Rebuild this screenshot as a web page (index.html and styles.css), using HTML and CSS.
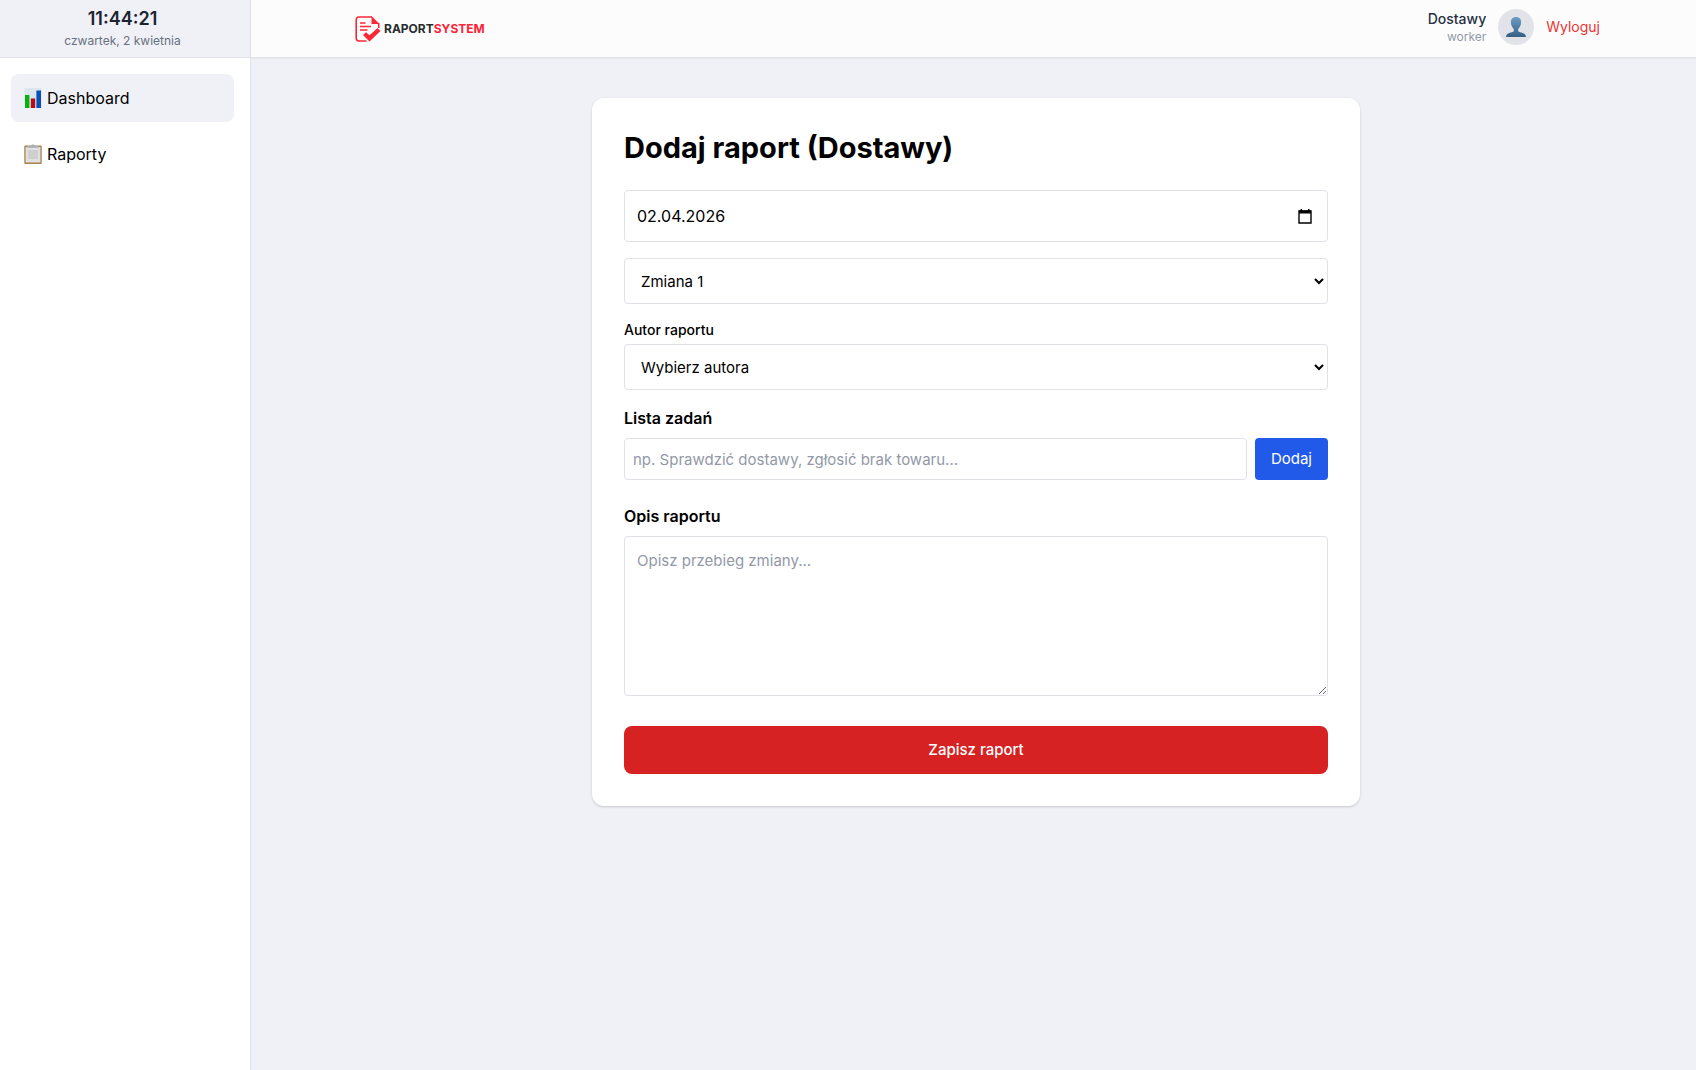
FILE: index.html
```html
<!doctype html>
<html lang="pl">
  <head>
    <meta charset="UTF-8" />
    <meta name="viewport" content="width=device-width, initial-scale=1.0" />
    <title>RaportSystem</title>
    <link rel="stylesheet" href="styles.css">
  </head>
  <body>
    <div class="layout">
      <aside class="sidebar">
        <div class="clock">
          <div class="clock-time">11:44:21</div>
          <div class="clock-date">czwartek, 2 kwietnia</div>
        </div>

        <nav class="nav">
          <a class="nav-link active" href="#dashboard">
            <svg class="nav-icon" viewBox="0 0 18 20" aria-hidden="true">
              <rect x="0.5" width="17" height="20" fill="#dce6ee" />
              <rect x="1" y="7" width="4.4" height="13" fill="#08b010" />
              <rect x="6.8" y="10.5" width="4.4" height="9.5" fill="#b80d18" />
              <rect x="12.4" y="2.5" width="4.6" height="17.5" fill="#0a4fb5" />
            </svg>
            <span>Dashboard</span>
          </a>
          <a class="nav-link" href="#raporty">
            <svg class="nav-icon" viewBox="0 0 18 20" aria-hidden="true">
              <rect x="0.3" y="1.5" width="17.4" height="18.5" rx="1" fill="#a9804e" />
              <rect x="1.6" y="3" width="14.8" height="15.500" fill="#e0e0e0" />
              <rect x="4" y="6" width="10" height="9" fill="#cfcfd0" />
              <path d="M3 3.800V2h4l1-1.600h2L11 2h4v1.800z" fill="#a8adb3" />
            </svg>
            <span>Raporty</span>
          </a>
        </nav>
      </aside>

      <div class="content">
        <header class="header">
          <div class="header-inner">
            <a class="logo" href="#dashboard">
              <svg class="logo-icon" viewBox="0 0 26 26" aria-hidden="true">
                <path d="M17 1H4Q1.200 1 1.200 4V22Q1.200 25 4 25H11.500" fill="none" stroke="#fb2638" stroke-width="1.600" />
                <path d="M16.500 0L24.500 8H16.500z" fill="#fb2638" />
                <path d="M23.700 7V12" stroke="#fb2638" stroke-width="1.600" />
                <path d="M5 7H10.500M5 10.500H16M5 14H12.500" stroke="#fb2638" stroke-width="1.400" />
                <path d="M8 19L11 16.200L14.500 19.200L22.500 12L25.500 15L14.500 25.500z" fill="#fb2638" />
              </svg>
              <span class="logo-text">RAPORT<span class="logo-accent">SYSTEM</span></span>
            </a>

            <div class="user">
              <div class="user-info">
                <div class="user-name">Dostawy</div>
                <div class="user-role">worker</div>
              </div>
              <div class="avatar">
                <svg class="avatar-icon" viewBox="0 0 20 20" aria-hidden="true">
                  <defs>
                    <linearGradient id="bust" x1="0" y1="0" x2="0" y2="1">
                      <stop offset="0" stop-color="#6d9cc2" />
                      <stop offset="1" stop-color="#365f85" />
                    </linearGradient>
                  </defs>
                  <path d="M10 0C6.500 0 4.700 2.300 4.900 5.500C5 8.500 6.300 10.500 7.800 12V14.300C6 15.800 0.300 15.500 0 20H20C19.700 15.500 14 15.800 12.200 14.300V12C13.700 10.500 15 8.500 15.100 5.500C15.300 2.300 13.500 0 10 0z" fill="url(#bust)" />
                </svg>
              </div>
              <button class="logout" type="button">Wyloguj</button>
            </div>
          </div>
        </header>

        <main class="main">
          <form class="card">
            <h1 class="card-title">Dodaj raport (Dostawy)</h1>

            <div class="date-field">
              <input class="date-input" type="text" value="02.04.2026" aria-label="Data raportu" />
              <button class="date-btn" type="button" aria-label="Pokaż kalendarz">
                <svg class="date-icon" viewBox="0 0 14 15" aria-hidden="true">
                  <path d="M1 2H13V14H1z" fill="none" stroke="#000" stroke-width="1.400" />
                  <path d="M1 1.500H13V4.500H1zM2.500 0H4V2H2.500zM10 0H11.500V2H10z" />
                </svg>
              </button>
            </div>

            <select class="select" aria-label="Zmiana">
              <option>Zmiana 1</option>
              <option>Zmiana 2</option>
              <option>Zmiana 3</option>
            </select>

            <div class="field">
              <label class="label-small" for="author">Autor raportu</label>
              <select class="select" id="author">
                <option>Wybierz autora</option>
              </select>
            </div>

            <div class="field">
              <label class="label" for="task">Lista zadań</label>
              <div class="task-row">
                <input class="task-input" id="task" type="text" placeholder="np. Sprawdzić dostawy, zgłosić brak towaru..." />
                <button class="btn btn-add" type="button">Dodaj</button>
              </div>
            </div>

            <div class="field field-description">
              <label class="label" for="description">Opis raportu</label>
              <textarea class="description" id="description" placeholder="Opisz przebieg zmiany..."></textarea>
            </div>

            <button class="btn btn-save" type="submit">Zapisz raport</button>
          </form>
        </main>
      </div>
    </div>
  </body>
</html>
```
FILE: styles.css
```css
:root {
  --background-color: #f0f1f6;
  --border-color: #e0e2e8;
  --text-color: #000;
  --muted-color: #9299a8;
  --red: #d62222;
  --blue: #2159e8;
}

* {
  margin: 0;
  padding: 0;
  box-sizing: border-box;
}

body {
  font-family: Inter, -apple-system, BlinkMacSystemFont, "Segoe UI", sans-serif;
  font-size: 16px;
  line-height: 24px;
  background-color: var(--background-color);
  color: var(--text-color);
}

input,
select,
textarea,
button {
  font: inherit;
  color: inherit;
}

.layout {
  display: flex;
  min-height: 100vh;
}

.sidebar {
  flex: none;
  width: 251px;
  background-color: #fff;
  border-right: 1px solid var(--border-color);
}

.clock {
  height: 58px;
  padding: 5px 5px 0 0;
  text-align: center;
  background-color: var(--background-color);
  border-bottom: 1px solid var(--border-color);
}

.clock-time {
  font-size: 18px;
  line-height: 28px;
  font-weight: 600;
  color: #1c2431;
}

.clock-date {
  font-size: 12px;
  line-height: 16px;
  color: #687080;
}

.nav {
  display: flex;
  flex-direction: column;
  gap: 8px;
  padding: 16px 16px 16px 11px;
}

.nav-link {
  display: flex;
  align-items: center;
  gap: 5px;
  padding: 12px 13px;
  border-radius: 8px;
  color: inherit;
  text-decoration: none;
}

.nav-link.active,
.nav-link:hover {
  background-color: var(--background-color);
}

.nav-icon {
  width: 18px;
  height: 20px;
}

.content {
  flex: 1;
  min-width: 0;
}

.header {
  padding-left: 5px;
  background-color: #fcfcfc;
  border-bottom: 1px solid var(--border-color);
  box-shadow: 0 1px 2px rgba(0, 0, 0, 0.05);
}

.header-inner {
  display: flex;
  align-items: center;
  justify-content: space-between;
  max-width: 1280px;
  height: 57px;
  margin: 0 auto;
  padding: 0 16px;
}

.logo {
  display: flex;
  align-items: center;
  gap: 3px;
  padding-left: 3px;
  color: #262d2c;
  text-decoration: none;
}

.logo-icon {
  width: 26px;
  height: 26px;
}

.logo-text {
  font-size: 12px;
  font-weight: 700;
}

.logo-accent {
  color: #fb2638;
}

.user {
  display: flex;
  align-items: center;
  gap: 12px;
  padding-bottom: 3px;
}

.user-info {
  text-align: right;
}

.user-name {
  font-size: 14px;
  line-height: 20px;
  font-weight: 500;
  color: #273142;
}

.user-role {
  font-size: 12px;
  line-height: 16px;
  color: var(--muted-color);
}

.avatar {
  display: flex;
  align-items: center;
  justify-content: center;
  width: 36px;
  height: 36px;
  border-radius: 50%;
  background-color: #e2e3e9;
}

.avatar-icon {
  width: 20px;
  height: 20px;
}

.logout {
  border: none;
  background: none;
  font-size: 14px;
  color: #ea3434;
  cursor: pointer;
}

.main {
  padding: 40px 0 40px 5px;
}

.card {
  display: flex;
  flex-direction: column;
  gap: 16px;
  max-width: 768px;
  margin: 0 auto;
  padding: 32px;
  background-color: #fff;
  border-radius: 12px;
  box-shadow: 0 1px 3px rgba(0, 0, 0, 0.1), 0 1px 2px rgba(0, 0, 0, 0.08);
}

.card-title {
  margin-bottom: 8px;
  font-size: 29px;
  line-height: 36px;
  font-weight: 700;
}

.date-field,
.select,
.task-input,
.description {
  width: 100%;
  background-color: #fff;
  border: 1px solid var(--border-color);
  border-radius: 4px;
}

.date-field {
  display: flex;
  align-items: center;
  height: 52px;
  padding: 0 15px 0 12px;
}

.date-input {
  flex: 1;
  min-width: 0;
  border: none;
  outline: none;
  background: none;
}

.date-btn {
  display: flex;
  border: none;
  background: none;
  cursor: pointer;
}

.date-icon {
  width: 14px;
  height: 15px;
}

.select {
  height: 46px;
  padding: 0 0 0 12px;
  font-size: 15px;
}

.field {
  display: flex;
  flex-direction: column;
}

.label-small {
  margin-bottom: 4px;
  font-size: 14px;
  line-height: 20px;
  font-weight: 500;
}

.label {
  margin-bottom: 8px;
  font-weight: 600;
}

.task-row {
  display: flex;
  gap: 8px;
}

.task-input {
  flex: 1;
  min-width: 0;
  height: 42px;
  padding: 8px;
  font-size: 15px;
}

.task-input::placeholder,
.description::placeholder {
  color: var(--muted-color);
}

.field-description {
  margin: 8px 0 14px;
}

.description {
  height: 160px;
  padding: 12px;
  font-size: 15px;
  resize: vertical;
}

.btn {
  border: none;
  color: #fff;
  font-size: 15px;
  cursor: pointer;
}

.btn-add {
  padding: 0 16px;
  border-radius: 4px;
  background-color: var(--blue);
}

.btn-save {
  height: 48px;
  border-radius: 8px;
  background-color: var(--red);
  font-weight: 500;
}
```
